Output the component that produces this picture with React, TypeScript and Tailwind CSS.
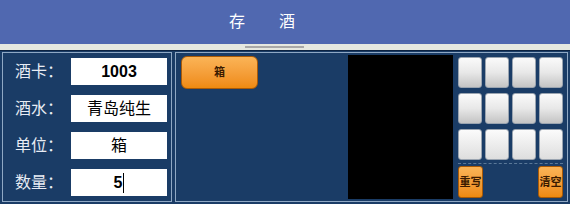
import React from 'react';

const fields = [
  { label: '酒卡：', value: '1003', bold: true },
  { label: '酒水：', value: '青岛纯生', bold: false },
  { label: '单位：', value: '箱', bold: false },
  { label: '数量：', value: '5', bold: true, cursor: true },
];

function KeyButton({ faded }: { faded?: boolean }) {
  return (
    <div
      className={`h-[31px] w-[24px] rounded-[3px] border border-[#9aa4b0] ${
        faded
          ? 'bg-gradient-to-b from-[#fbfbfb] to-[#dedede]'
          : 'bg-gradient-to-b from-[#fafafa] via-[#e8e8e8] to-[#c4c4c4]'
      }`}
    />
  );
}

function OrangeKey({ text }: { text: string }) {
  return (
    <div className="flex h-[32px] w-[25px] items-center justify-center rounded-[3px] border border-[#a85a08] bg-gradient-to-b from-[#fbb456] to-[#ee8a0e] text-[11px] font-bold text-[#3a1a00]">
      {text}
    </div>
  );
}

export default function App() {
  return (
    <div
      className="flex h-[204px] w-[570px] flex-col overflow-hidden bg-[#1a3c66]"
      style={{ fontFamily: '"Liberation Serif", "Noto Sans CJK SC", serif' }}
    >
      <div className="flex h-[44px] items-center justify-center bg-[#5068b0] pr-[46px] text-[16px] text-white">
        <span>存</span>
        <span className="ml-[34px]">酒</span>
      </div>
      <div className="flex h-[6px] items-center justify-center bg-[#e6e8e0] pr-[22px]">
        <div className="h-[2px] w-[59px] bg-[#a8a8a8]" />
      </div>
      <div className="flex flex-1 gap-[3px] border-t border-[#0c2240] px-[2px] pt-[1px] pb-[2px]">
        <div className="flex w-[170px] flex-col gap-[10px] border border-[#8fa8c4] pt-[5px] pl-[12px]">
          {fields.map((f) => (
            <div key={f.label} className="flex items-center">
              <span className="w-[56px] text-[16px] text-[#e8ecf4]">{f.label}</span>
              <div
                className={`flex h-[27px] w-[96px] items-center justify-center bg-white text-[16px] text-black ${
                  f.bold ? 'font-bold' : ''
                }`}
                style={f.bold ? { fontFamily: '"Liberation Sans", Arial, sans-serif' } : undefined}
              >
                {f.value}
                {f.cursor && <span className="ml-[1px] h-[20px] w-px bg-black" />}
              </div>
            </div>
          ))}
        </div>
        <div className="flex flex-1 border border-[#8fa8c4] pt-[2px] pb-[2px] pl-[5px]">
          <div className="flex-1 pt-[1px]">
            <div className="flex h-[33px] w-[77px] items-center justify-center rounded-[6px] border border-[#a85a08] bg-gradient-to-b from-[#fbb456] to-[#ee8a0e] text-[11px] font-bold text-[#3a1a00]">
              箱
            </div>
          </div>
          <div className="mr-[5px] w-[105px] bg-black" />
          <div className="flex w-[105px] flex-col pt-[2px]">
            <div className="grid grid-cols-4 gap-x-[3px] gap-y-[5px]">
              {Array.from({ length: 8 }).map((_, i) => (
                <KeyButton key={i} />
              ))}
              {Array.from({ length: 4 }).map((_, i) => (
                <KeyButton key={'f' + i} faded />
              ))}
            </div>
            <div className="mt-[3px] mb-[2px] border-t border-dashed border-[#5a7898]" />
            <div className="flex justify-between">
              <OrangeKey text="重写" />
              <OrangeKey text="清空" />
            </div>
          </div>
          <div className="w-[4px]" />
        </div>
      </div>
    </div>
  );
}
